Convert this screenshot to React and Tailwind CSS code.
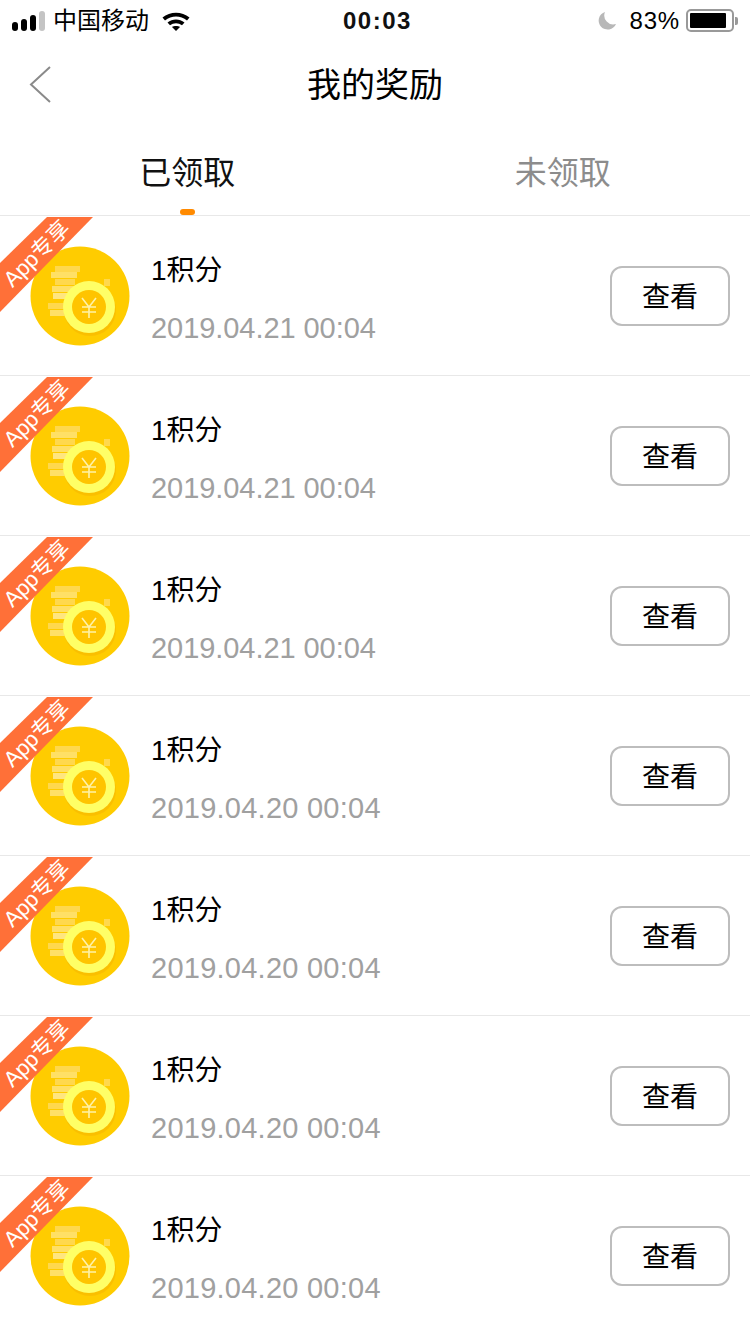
import React from "react";

const FONT = { fontFamily: '"Liberation Sans","Noto Sans CJK SC",sans-serif' };

function Coin() {
  return (
    <svg width="100" height="100" viewBox="0 0 100 100" className="shrink-0">
      <circle cx="50" cy="50" r="49.5" fill="#ffcc00" />
      <rect x="25" y="20" width="25" height="6" fill="#ffd84d" />
      <rect x="21" y="26" width="26" height="6" fill="#ffe066" />
      <rect x="25" y="33" width="20" height="6" fill="#ffd84d" />
      <rect x="22" y="40" width="24" height="6" fill="#ffe066" />
      <rect x="23" y="47" width="20" height="6" fill="#ffe680" />
      <rect x="18" y="57" width="20" height="6" fill="#ffd84d" />
      <rect x="20" y="64" width="18" height="6" fill="#ffe066" />
      <rect x="74" y="33" width="6" height="7" fill="#ffd84d" />
      <circle cx="60" cy="64" r="26" fill="#f5b400" opacity="0.55" />
      <circle cx="59" cy="61" r="26" fill="#ffff66" />
      <circle cx="59" cy="61" r="17" fill="#ffc400" />
      <path d="M52 52 L59 61 L66 52 M59 61 V72 M52 61 H66 M52 66 H66" fill="none" stroke="#fff2a8" strokeWidth="1.6" />
    </svg>
  );
}

function Row({ date, wide }) {
  return (
    <div className="relative flex h-[160px] items-center border-b border-[#e8e8e8] pl-[30px] pr-5" style={FONT}>
      <Coin />
      <div className="ml-[21px] flex-1 pt-[8px]">
        <div className="text-[28px] leading-[40px] text-black">1积分</div>
        <div className={wide ? "mt-[17px] text-[29px] leading-[40px] tracking-[0.25px] text-[#a0a0a0]" : "mt-[17px] text-[29px] leading-[40px] tracking-[-0.06px] text-[#a0a0a0]"}>{date}</div>
      </div>
      <div className="flex h-[60px] w-[120px] items-center justify-center rounded-[12px] border-2 border-[#bdbdbd] pt-[4px] text-[28px] text-black">查看</div>
      <div className="absolute left-0 top-[1px] h-[96px] w-[93px] bg-[#ff7038] [clip-path:polygon(47px_0,93px_0,0_95px,0_46px)]" />
      <div className="absolute left-[-5px] top-[28px] w-[84px] -rotate-45 whitespace-nowrap text-center text-[22px] leading-[20px] text-white">App专享</div>
    </div>
  );
}

export default function App() {
  const dates = ["2019.04.21 00:04", "2019.04.21 00:04", "2019.04.21 00:04", "2019.04.20 00:04", "2019.04.20 00:04", "2019.04.20 00:04", "2019.04.20 00:04"];
  return (
    <div className="h-[1334px] w-[750px] overflow-hidden bg-white" style={FONT}>
      <div className="relative flex h-[40px] items-center justify-between pt-[1px] text-[24px] text-black">
        <div className="flex items-center pl-3">
          <div className="flex items-end gap-[3px]">
            <span className="h-[9px] w-[6px] rounded-[3px] bg-black" />
            <span className="h-[12px] w-[6px] rounded-[3px] bg-black" />
            <span className="h-[16px] w-[6px] rounded-[3px] bg-black" />
            <span className="h-[20px] w-[6px] rounded-[3px] bg-[#c4c4c4]" />
          </div>
          <span className="ml-[8px]">中国移动</span>
          <svg width="30" height="22" viewBox="0 0 30 22" className="ml-[12px]">
            <path d="M1.5 7.5 C9 1 21 1 28.5 7.5 L26 10.5 C19.5 5 10.5 5 4 10.5 Z" />
            <path d="M6.5 12.5 C11.5 8.5 18.5 8.5 23.5 12.5 L21 15.3 C17.5 12.5 12.5 12.5 9 15.3 Z" />
            <path d="M11 17 C13 15.6 17 15.6 19 17 L15 21 Z" />
          </svg>
        </div>
        <div className="absolute left-[343px] top-[4px] font-bold leading-[34px] tracking-[1.5px] text-[#111]">00:03</div>
        <div className="flex items-center pr-[12px]">
          <svg width="20" height="20" viewBox="0 0 20 20" className="mr-[13px]">
            <path d="M8 1 A9 9 0 1 0 19 13 A9 9 0 0 1 8 1 Z" fill="#b8b8b8" />
          </svg>
          <span className="tracking-[0.8px]">83%</span>
          <div className="ml-[6px] flex h-[23px] w-[48px] items-center rounded-[5px] border-2 border-[#999] p-[2px]">
            <div className="h-full w-[36px] rounded-[1px] bg-black" />
          </div>
          <div className="ml-[1px] h-[8px] w-[3px] rounded-r-[2px] bg-[#999]" />
        </div>
      </div>

      <div className="relative flex h-[88px] items-center justify-center pt-[3px]">
        <svg width="24" height="40" viewBox="0 0 24 40" className="absolute left-[29px] top-[25px]">
          <path d="M21 2 L2 19.5 L21 37" fill="none" stroke="#8a8a8a" strokeWidth="2" />
        </svg>
        <span className="text-[34px] text-black">我的奖励</span>
      </div>

      <div className="relative flex h-[88px] border-b border-[#e8e8e8]">
        <div className="flex h-full flex-1 items-center justify-center pr-[1px] pt-[2px] text-[32px] text-[#111]">已领取</div>
        <div className="flex h-full flex-1 items-center justify-center pt-[2px] text-[32px] text-[#8c8c8c]">未领取</div>
        <div className="absolute bottom-0 left-[180px] h-[6px] w-[15px] rounded-full bg-[#ff8a00]" />
      </div>

      {dates.map((d, i) => (
        <Row key={i} date={d} wide={i >= 3} />
      ))}
    </div>
  );
}
